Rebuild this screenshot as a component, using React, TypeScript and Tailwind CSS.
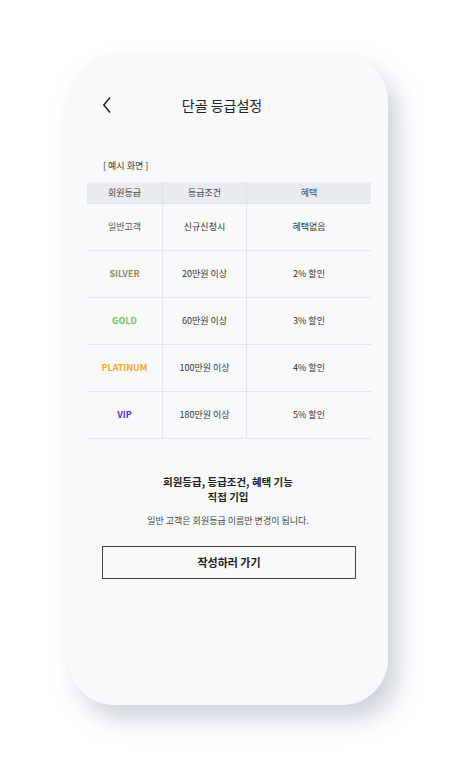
import React from "react";

const rows = [
  { g: "일반고객", c: "신규신청시", b: "혜택없음", color: "text-[#555]", bold: false },
  { g: "SILVER", c: "20만원 이상", b: "2% 할인", color: "text-[#a0865e]", bold: true },
  { g: "GOLD", c: "60만원 이상", b: "3% 할인", color: "text-[#7cc45a]", bold: true },
  { g: "PLATINUM", c: "100만원 이상", b: "4% 할인", color: "text-[#f7a330]", bold: true },
  { g: "VIP", c: "180만원 이상", b: "5% 할인", color: "text-[#4a2ec0]", bold: true },
];

export default function App() {
  return (
    <div
      className="w-[457px] h-[776px] bg-white relative overflow-hidden"
      style={{ fontFamily: '"Noto Sans CJK KR", "Noto Sans", Roboto, sans-serif' }}
    >
      <div className="pt-[55px] pl-[68px]">
        <div className="w-[320px] h-[650px] rounded-[46px] bg-[#f8f9fa] shadow-[10px_14px_24px_rgba(110,125,150,0.35)] flex flex-col">
          <div className="relative pt-[42px] pr-[12px] flex justify-center">
            <svg className="absolute left-[34px] top-[41px]" width="10" height="18" viewBox="0 0 10 18">
              <path d="M8 1.5 L1.8 9 L8 16.5" fill="none" stroke="#222" strokeWidth="1.5" />
            </svg>
            <span className="text-[14px] text-[#222] leading-[16px]">단골 등급설정</span>
          </div>
          <div className="mt-[48px] pl-[35px] text-[9px] text-[#333] leading-[9px]">[ 예시 화면 ]</div>
          <div className="mt-[12px] ml-[19px] w-[284px]">
            <div className="grid grid-cols-[76px_84px_124px] h-[22px] bg-[#e8ebf0] border-b border-[#e0e3e8] text-[9px] text-[#444]">
              <div className="flex items-center justify-center border-r border-[#dfe2e7]">회원등급</div>
              <div className="flex items-center justify-center border-r border-[#dfe2e7]">등급조건</div>
              <div className="flex items-center justify-center">혜택</div>
            </div>
            {rows.map((r) => (
              <div
                key={r.g}
                className="grid grid-cols-[76px_84px_124px] h-[47px] border-b border-[#e3e5e9] text-[9px] text-[#333]"
              >
                <div className={`flex items-center justify-center border-r border-[#e3e5e9] ${r.color} ${r.bold ? "font-bold" : ""}`}>
                  {r.g}
                </div>
                <div className="flex items-center justify-center border-r border-[#e3e5e9]">{r.c}</div>
                <div className="flex items-center justify-center">{r.b}</div>
              </div>
            ))}
          </div>
          <div className="mt-[35px] flex flex-col items-center text-center">
            <div className="text-[10.5px] font-bold text-[#222] leading-[15px]">
              회원등급, 등급조건, 혜택 기능
              <br />
              직접 기입
            </div>
            <div className="mt-[12px] text-[9px] text-[#444] leading-none">일반 고객은 회원등급 이름만 변경이 됩니다.</div>
          </div>
          <div className="mt-[21px] ml-[34px] w-[254px] h-[33px] border border-[#444] flex items-center justify-center text-[11px] font-bold text-[#222]">
            작성하러 가기
          </div>
        </div>
      </div>
    </div>
  );
}
